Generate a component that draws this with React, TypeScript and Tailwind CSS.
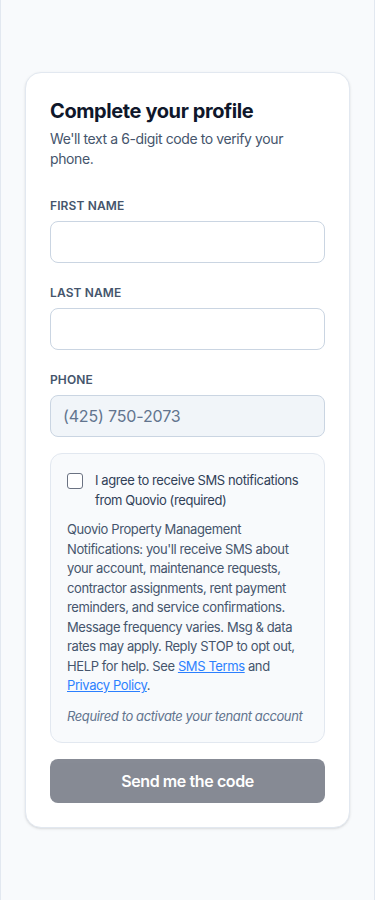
export default function App() {
    const fields = [
        { id: "firstName", label: "First name", value: "", readOnly: false },
        { id: "lastName", label: "Last name", value: "", readOnly: false },
        { id: "phone", label: "Phone", value: "(425) 750-2073", readOnly: true },
    ];

    return (
        <div
            className="min-h-screen w-full bg-slate-50 border-x border-[#e2e8f0] px-6 flex items-center tracking-[-0.025em]"
            style={{ fontFamily: "Inter, 'Noto Sans', sans-serif" }}
        >
            <div className="w-full bg-white border border-slate-200 rounded-2xl shadow-sm px-6 pt-6 pb-6">
                <h1 className="text-xl leading-7 font-bold text-slate-900">Complete your profile</h1>
                <p className="mt-1 text-sm leading-5 text-slate-600">
                    We'll text a 6-digit code to verify your phone.
                </p>

                <form className="mt-[29px] flex flex-col gap-[22px]" onSubmit={(e) => e.preventDefault()}>
                    {fields.map((f) => (
                        <div key={f.id} className="flex flex-col">
                            <label
                                htmlFor={f.id}
                                className="text-xs leading-4 font-semibold uppercase tracking-[0.01em] text-slate-600 mb-[7px]"
                            >
                                {f.label}
                            </label>
                            <input
                                id={f.id}
                                defaultValue={f.value}
                                readOnly={f.readOnly}
                                className={
                                    f.readOnly
                                        ? "h-[42px] w-full rounded-lg border border-slate-300 bg-slate-100 px-3 text-base tracking-[-0.01em] text-slate-500 focus:outline-none"
                                        : "h-[42px] w-full rounded-lg border border-slate-300 bg-white px-3 text-base text-slate-900 focus:outline-none"
                                }
                            />
                        </div>
                    ))}
                </form>

                <div className="mt-4 rounded-xl border border-slate-200 bg-slate-50 p-4">
                    <label className="flex items-start gap-3">
                        <input
                            type="checkbox"
                            className="mt-[3px] h-4 w-4 shrink-0 appearance-none rounded-[3px] border border-gray-500 bg-white"
                        />
                        <span className="text-[13px] leading-5 text-slate-700">
                            I agree to receive SMS notifications from Quovio (required)
                        </span>
                    </label>
                    <p className="mt-2.5 text-[13px] leading-[19.5px] text-slate-600">
                        Quovio Property Management Notifications: you'll receive SMS about your account,
                        maintenance requests, contractor assignments, rent payment reminders, and service
                        confirmations. Message frequency varies. Msg &amp; data rates may apply. Reply STOP to
                        opt out, HELP for help. See{" "}
                        <a href="#" className="text-blue-500 underline">SMS Terms</a> and{" "}
                        <a href="#" className="text-blue-500 underline">Privacy Policy</a>.
                    </p>
                    <p className="mt-2.5 text-[13px] leading-5 italic text-slate-500">
                        Required to activate your tenant account
                    </p>
                </div>

                <button
                    type="button"
                    disabled
                    className="mt-4 h-11 w-full rounded-lg bg-slate-900 opacity-50 text-base font-semibold text-white"
                >
                    Send me the code
                </button>
            </div>
        </div>
    );
}
